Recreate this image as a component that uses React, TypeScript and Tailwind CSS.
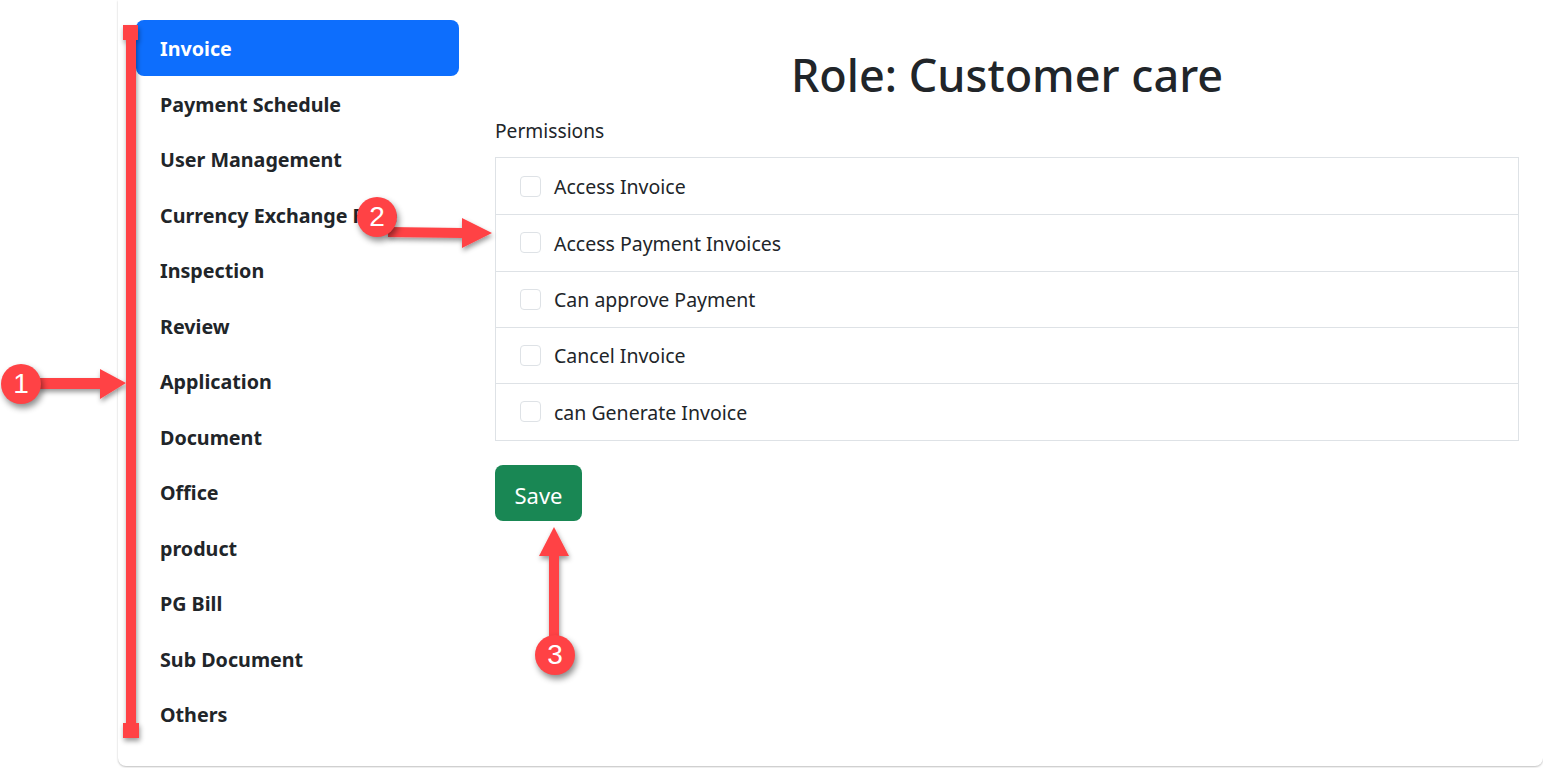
import React from "react";

const navItems = [
  "Invoice",
  "Payment Schedule",
  "User Management",
  "Currency Exchange Rate",
  "Inspection",
  "Review",
  "Application",
  "Document",
  "Office",
  "product",
  "PG Bill",
  "Sub Document",
  "Others",
];

const permissions = [
  "Access Invoice",
  "Access Payment Invoices",
  "Can approve Payment",
  "Cancel Invoice",
  "can Generate Invoice",
];

// numbered red marker used by the screenshot annotations
const Marker = ({ label, className }: { label: string; className: string }) => (
  <div
    className={`absolute flex h-10 w-10 items-center justify-center rounded-full bg-[#ff4245] text-[28px] leading-none text-white shadow-[2px_4px_6px_rgba(0,0,0,0.45)] ${className}`}
    style={{ fontFamily: '"Liberation Sans", Arial, sans-serif' }}
  >
    {label}
  </div>
);

// the red arrows and the long bar, drawn over the page
const Annotations = () => (
  <svg
    className="pointer-events-none absolute left-0 top-0"
    width="1543"
    height="768"
    viewBox="0 0 1543 768"
  >
    <defs>
      <filter id="arrowShadow" x="-30%" y="-30%" width="160%" height="160%">
        <feDropShadow dx="1" dy="3" stdDeviation="2.5" floodColor="#000" floodOpacity="0.4" />
      </filter>
    </defs>
    <g fill="#ff4245" filter="url(#arrowShadow)">
      <rect x="126" y="30" width="10" height="700" />
      <rect x="123" y="25" width="15" height="15" />
      <rect x="123" y="723" width="16" height="15" />
      <rect x="38" y="378" width="64" height="11" />
      <polygon points="100,369 126,383 100,399" />
      <polygon points="388,227 462,228 462,218 492,233 462,248 462,238 388,237" />
      <rect x="549" y="555" width="10" height="84" />
      <polygon points="539,556 554,527 569,556" />
    </g>
  </svg>
);

export default function App() {
  return (
    <div
      className="relative h-[768px] w-[1543px] overflow-hidden bg-white text-[#212529]"
      style={{ fontFamily: '"Noto Sans", "Open Sans", sans-serif' }}
    >
      <div className="ml-[118px] flex h-[766px] rounded-b-lg bg-white pl-[18px] pr-6 pt-5 shadow-[0_1px_2px_rgba(0,0,0,0.25)]">
        <nav className="flex w-[323px] shrink-0 flex-col">
          {navItems.map((item, index) => (
            <a
              key={item}
              className={`flex h-[55.5px] items-center overflow-hidden whitespace-nowrap rounded-lg px-6 pt-[3px] text-[19.7px] font-bold ${
                index === 0 ? "bg-[#0d6efd] text-white" : "text-[#212529]"
              }`}
            >
              {item}
            </a>
          ))}
        </nav>
        <main className="ml-9 flex-1">
          <h1 className="mt-[22px] text-center text-[45px] font-medium leading-[66px]">
            Role: Customer care
          </h1>
          <div className="mt-[8px] text-[19.2px] leading-[30px]">Permissions</div>
          <ul className="mt-[11px] border border-[#dee2e6] pb-px">
            {permissions.map((permission, index) => (
              <li
                key={permission}
                className={`flex h-[56.3px] items-center pl-6 text-[19.5px] ${
                  index > 0 ? "border-t border-[#dee2e6]" : ""
                }`}
              >
                <span className="mr-[13px] h-[21px] w-[21px] rounded border border-[#dee2e6] bg-white" />
                <span className="pt-px">{permission}</span>
              </li>
            ))}
          </ul>
          <button className="mt-6 flex h-14 w-[87px] items-center justify-center rounded-lg bg-[#198754] pt-1 text-[22px] text-white">
            Save
          </button>
        </main>
      </div>
      <Annotations />
      <Marker label="1" className="left-[1px] top-[364px]" />
      <Marker label="2" className="left-[357px] top-[197px]" />
      <Marker label="3" className="left-[535px] top-[635px]" />
    </div>
  );
}
